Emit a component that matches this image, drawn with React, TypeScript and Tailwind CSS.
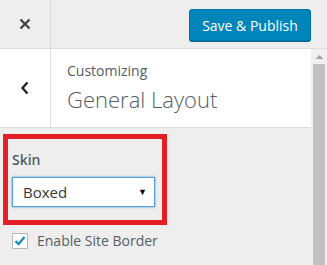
import React from 'react';

export default function App() {
  return (
    <div className="w-[327px] h-[265px] overflow-hidden bg-[#eeeeee] flex flex-col font-['Open_Sans',sans-serif]">
      {/* top bar */}
      <div className="h-[49px] flex border-b border-[#dddddd] shrink-0">
        <div className="w-[51px] border-r border-[#dddddd] flex items-center justify-center">
          <svg width="12" height="12" viewBox="0 0 12 12">
            <path d="M1.5 1.5 L10.5 10.5 M10.5 1.5 L1.5 10.5" stroke="#444" strokeWidth="2.4" />
          </svg>
        </div>
        <div className="flex-1 flex items-start justify-end pr-[16px] pt-[9px]">
          <button className="w-[122px] h-[32px] rounded-[3px] bg-[#0085ba] border border-[#0073aa] text-white text-[14px] shadow-[0_1px_0_#006799]">
            Save &amp; Publish
          </button>
        </div>
      </div>

      <div className="flex flex-1">
        <div className="w-[311px] flex flex-col">
          {/* section header */}
          <div className="h-[79px] bg-white flex border-b border-[#dddddd]">
            <div className="w-[51px] border-r border-[#dddddd] flex items-center justify-center">
              <svg width="10" height="14" viewBox="0 0 10 14">
                <path d="M7.5 1.5 L2.5 7 L7.5 12.5" fill="none" stroke="#222" strokeWidth="2.4" />
              </svg>
            </div>
            <div className="pl-[16px] pt-[12px] text-[#555d66]">
              <div className="text-[14px] leading-[20px]">Customizing</div>
              <div className="text-[22px] leading-[28px] font-light mt-[4px]">General Layout</div>
            </div>
          </div>

          {/* controls */}
          <div className="pl-[3px] pt-[6px]">
            <div className="w-[164px] h-[91px] border-[5px] border-[#e31e25] pl-[4px] pt-[11px]">
              <div className="text-[14px] leading-[20px] font-semibold text-[#555d66]">Skin</div>
              <div className="mt-[7px] w-[143px] h-[30px] bg-white border border-[#5b9dd9] shadow-[0_0_2px_rgba(30,140,190,0.8)] flex items-center justify-between pl-[10px] pr-[7px]">
                <span className="text-[15px] text-[#32373c]">Boxed</span>
                <span className="text-[9px] text-black">▼</span>
              </div>
            </div>
            <div className="flex items-center mt-[5px] pl-[9px]">
              <div className="w-[16px] h-[16px] bg-white border border-[#b4b9be] flex items-center justify-center">
                <svg width="14" height="14" viewBox="0 0 14 14">
                  <path d="M2.5 7 L5.5 10 L11.5 3" fill="none" stroke="#1e8cbe" strokeWidth="2.4" />
                </svg>
              </div>
              <span className="ml-[9px] text-[14px] text-[#555d66]">Enable Site Border</span>
            </div>
          </div>
        </div>

        {/* scrollbar */}
        <div className="w-[16px] bg-[#f0f0f0] flex flex-col items-center">
          <svg width="9" height="6" viewBox="0 0 9 6" className="mt-[5px]">
            <path d="M0.5 5 L4.5 1 L8.5 5 Z" fill="#a3a3a3" />
          </svg>
          <div className="w-[12px] flex-1 mt-[4px] bg-[#c1c1c1]" />
        </div>
      </div>
    </div>
  );
}
